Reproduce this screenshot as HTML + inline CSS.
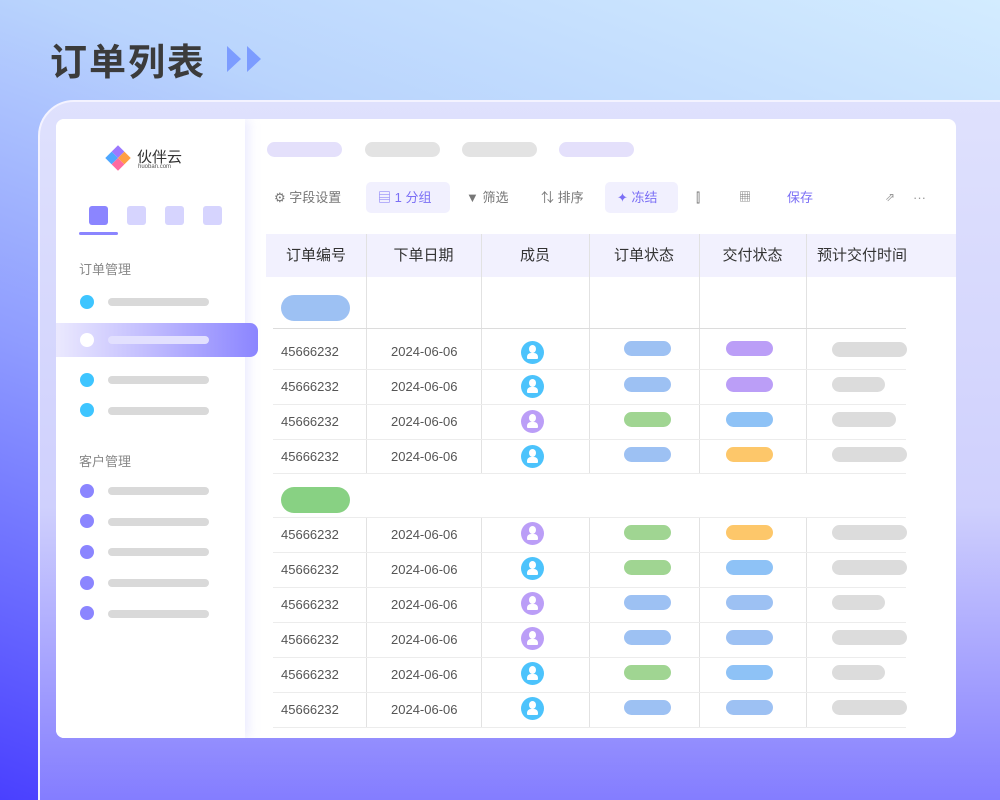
<!DOCTYPE html>
<html style="overflow:hidden;width:1000px;height:800px"><head><meta charset="utf-8"><style>
*{margin:0;padding:0;box-sizing:border-box}
body{width:1000px;height:800px;overflow:hidden;position:relative;font-family:"Liberation Sans","Noto Sans CJK SC",sans-serif;
background:linear-gradient(200deg,#d3ecff 0%,#b9d4fd 30%,#8f9cff 60%,#4a40ff 100%);}
.a{position:absolute}
.frame{left:38px;top:100px;width:1000px;height:740px;border:2px solid #f4f3ff;border-radius:36px;
background:linear-gradient(180deg,#dfe1fd 0%,#cfd0fd 55%,#7a72ff 100%)}
.card{left:56px;top:119px;width:900px;height:619px;background:#fff;border-radius:8px;overflow:hidden}
.side{left:0;top:0;width:189px;height:619px;background:#fff;box-shadow:4px 0 10px rgba(180,180,255,.25)}
.pill{position:absolute;height:15px;border-radius:8px}
.ln{position:absolute;height:8px;border-radius:4px;background:#d9d9d9;left:52px;width:101px}
.dot{position:absolute;width:14px;height:14px;border-radius:50%;left:24px}
.tb{position:absolute;top:63px;height:31px;line-height:31px;font-size:13px;color:#777}
.th{position:absolute;top:115px;height:43px;line-height:43px;font-size:15px;color:#333;text-align:center}
.vl{position:absolute;width:1px;background:#e2e2e2}
.hl{position:absolute;left:217px;width:633px;height:1px;background:#ececec}
.id{position:absolute;left:225px;font-size:13px;color:#555}
.dt{position:absolute;left:335px;font-size:13px;color:#555}
.av{position:absolute;left:465px;width:23px;height:23px;border-radius:50%}
.av::before{content:"";position:absolute;left:8px;top:4px;width:7px;height:8px;border-radius:50%;background:#fff}
.av::after{content:"";position:absolute;left:6px;top:12px;width:11px;height:6px;border-radius:4px 4px 1px 1px;background:#fff}
</style></head><body>
<div class="a" style="left:50px;top:32px;font-size:37px;font-weight:bold;color:#3b3b3b;letter-spacing:2px">订单列表</div>
<svg class="a" style="left:227px;top:46px" width="38" height="26"><polygon points="0,0 14,13 0,26" fill="#7c9cff"/><polygon points="20,0 34,13 20,26" fill="#7c9cff"/></svg>
<div class="a frame"></div>
<div class="a card">
 <div class="a side">
  <svg class="a" style="left:49px;top:26px" width="26" height="26"><g transform="rotate(45 13 13)"><rect x="4" y="4" width="9" height="9" fill="#9c78ff"/><rect x="13" y="4" width="9" height="9" fill="#ff9f43"/><rect x="4" y="13" width="9" height="9" fill="#4ea7ff"/><rect x="13" y="13" width="9" height="9" fill="#ff6aa0"/></g></svg>
  <div class="a" style="left:81px;top:27px;font-size:15px;color:#333">伙伴云</div>
  <div class="a" style="left:82px;top:45px;font-size:6px;color:#555">huoban.com</div>
  <div class="a" style="left:33px;top:87px;width:19px;height:19px;border-radius:3px;background:#8b85ff"></div>
  <div class="a" style="left:71px;top:87px;width:19px;height:19px;border-radius:3px;background:#d6d4fe"></div>
  <div class="a" style="left:109px;top:87px;width:19px;height:19px;border-radius:3px;background:#d6d4fe"></div>
  <div class="a" style="left:147px;top:87px;width:19px;height:19px;border-radius:3px;background:#d6d4fe"></div>
  <div class="a" style="left:23px;top:113px;width:39px;height:3px;border-radius:2px;background:#8b85ff"></div>
  <div class="a" style="left:23px;top:140px;font-size:13px;color:#888">订单管理</div>
  <div class="dot" style="top:176px;background:#3ec5ff"></div><div class="ln" style="top:179px"></div>
  <div class="dot" style="top:254px;background:#3ec5ff"></div><div class="ln" style="top:257px"></div>
  <div class="dot" style="top:284px;background:#3ec5ff"></div><div class="ln" style="top:288px"></div>
  <div class="a" style="left:23px;top:332px;font-size:13px;color:#888">客户管理</div>
  <div class="dot" style="top:365px;background:#8b85ff"></div><div class="ln" style="top:368px"></div>
  <div class="dot" style="top:395px;background:#8b85ff"></div><div class="ln" style="top:399px"></div>
  <div class="dot" style="top:426px;background:#8b85ff"></div><div class="ln" style="top:429px"></div>
  <div class="dot" style="top:457px;background:#8b85ff"></div><div class="ln" style="top:460px"></div>
  <div class="dot" style="top:487px;background:#8b85ff"></div><div class="ln" style="top:491px"></div>
 </div>
 <div class="a" style="left:0;top:204px;width:202px;height:34px;border-radius:0 8px 8px 0;background:linear-gradient(90deg,#ebe9fe,#bdb8fe 50%,#8b85ff);z-index:2"></div>
 <div class="dot" style="top:214px;background:#fff;z-index:3"></div><div class="ln" style="top:217px;background:#e2e0fe;z-index:3"></div>

 <div class="pill" style="left:211px;top:23px;width:75px;background:#e4e0fb"></div>
 <div class="pill" style="left:309px;top:23px;width:75px;background:#e3e3e3"></div>
 <div class="pill" style="left:406px;top:23px;width:75px;background:#e3e3e3"></div>
 <div class="pill" style="left:503px;top:23px;width:75px;background:#e4e0fb"></div>

 <div class="tb" style="left:218px">⚙ 字段设置</div>
 <div class="tb" style="left:310px;width:84px;border-radius:5px;background:#f1f0fe;color:#7b6ff5;padding-left:12px">▤ 1 分组</div>
 <div class="tb" style="left:410px">▼ 筛选</div>
 <div class="tb" style="left:485px">⇅ 排序</div>
 <div class="tb" style="left:549px;width:73px;border-radius:5px;background:#f1f0fe;color:#7b6ff5;padding-left:12px">✦ 冻结</div>
 <div class="tb" style="left:640px">⫿</div>
 <div class="tb" style="left:683px;font-size:12px">▦</div>
 <div class="tb" style="left:731px;color:#7b6ff5">保存</div>
 <div class="tb" style="left:829px;font-size:12px;color:#999">⇗</div>
 <div class="tb" style="left:857px;color:#999">···</div>

 <div class="a" style="left:210px;top:115px;width:690px;height:43px;background:#f2f1fe"></div>
 <div class="th" style="left:210px;width:100px">订单编号</div>
 <div class="th" style="left:310px;width:115px">下单日期</div>
 <div class="th" style="left:425px;width:108px">成员</div>
 <div class="th" style="left:533px;width:110px">订单状态</div>
 <div class="th" style="left:643px;width:107px">交付状态</div>
 <div class="th" style="left:750px;width:112px">预计交付时间</div>

 <div class="vl" style="left:310px;top:115px;height:240px"></div>
 <div class="vl" style="left:425px;top:115px;height:240px"></div>
 <div class="vl" style="left:533px;top:115px;height:240px"></div>
 <div class="vl" style="left:643px;top:115px;height:240px"></div>
 <div class="vl" style="left:750px;top:115px;height:240px"></div>
 <div class="vl" style="left:310px;top:398px;height:210px"></div>
 <div class="vl" style="left:425px;top:398px;height:210px"></div>
 <div class="vl" style="left:533px;top:398px;height:210px"></div>
 <div class="vl" style="left:643px;top:398px;height:210px"></div>
 <div class="vl" style="left:750px;top:398px;height:210px"></div>

 <div class="pill" style="left:225px;top:176px;width:69px;height:26px;border-radius:13px;background:#9dc1f3"></div>
 <div class="hl" style="top:209px;background:#dcdcdc"></div>
 <div class="hl" style="top:250px"></div><div class="hl" style="top:285px"></div><div class="hl" style="top:320px"></div><div class="hl" style="top:354px"></div>
 <div class="pill" style="left:225px;top:368px;width:69px;height:26px;border-radius:13px;background:#88d183"></div>
 <div class="hl" style="top:398px"></div><div class="hl" style="top:433px"></div><div class="hl" style="top:468px"></div><div class="hl" style="top:503px"></div><div class="hl" style="top:538px"></div><div class="hl" style="top:573px"></div><div class="hl" style="top:608px"></div>

 <div class="id" style="top:225px">45666232</div><div class="dt" style="top:225px">2024-06-06</div><div class="av" style="top:222px;background:#4cc3fc"></div>
 <div class="pill" style="left:568px;top:222px;width:47px;background:#9dc1f3"></div><div class="pill" style="left:670px;top:222px;width:47px;background:#bb9ef7"></div><div class="pill" style="left:776px;top:223px;width:75px;background:#dcdcdc"></div>

 <div class="id" style="top:260px">45666232</div><div class="dt" style="top:260px">2024-06-06</div><div class="av" style="top:256px;background:#4cc3fc"></div>
 <div class="pill" style="left:568px;top:258px;width:47px;background:#9dc1f3"></div><div class="pill" style="left:670px;top:258px;width:47px;background:#bb9ef7"></div><div class="pill" style="left:776px;top:258px;width:53px;background:#dcdcdc"></div>

 <div class="id" style="top:295px">45666232</div><div class="dt" style="top:295px">2024-06-06</div><div class="av" style="top:291px;background:#bb9ef7"></div>
 <div class="pill" style="left:568px;top:293px;width:47px;background:#a0d592"></div><div class="pill" style="left:670px;top:293px;width:47px;background:#8ec2f6"></div><div class="pill" style="left:776px;top:293px;width:64px;background:#dcdcdc"></div>

 <div class="id" style="top:330px">45666232</div><div class="dt" style="top:330px">2024-06-06</div><div class="av" style="top:326px;background:#4cc3fc"></div>
 <div class="pill" style="left:568px;top:328px;width:47px;background:#9dc1f3"></div><div class="pill" style="left:670px;top:328px;width:47px;background:#fdc76a"></div><div class="pill" style="left:776px;top:328px;width:75px;background:#dcdcdc"></div>

 <div class="id" style="top:408px">45666232</div><div class="dt" style="top:408px">2024-06-06</div><div class="av" style="top:403px;background:#bb9ef7"></div>
 <div class="pill" style="left:568px;top:406px;width:47px;background:#a0d592"></div><div class="pill" style="left:670px;top:406px;width:47px;background:#fdc76a"></div><div class="pill" style="left:776px;top:406px;width:75px;background:#dcdcdc"></div>

 <div class="id" style="top:443px">45666232</div><div class="dt" style="top:443px">2024-06-06</div><div class="av" style="top:438px;background:#4cc3fc"></div>
 <div class="pill" style="left:568px;top:441px;width:47px;background:#a0d592"></div><div class="pill" style="left:670px;top:441px;width:47px;background:#8ec2f6"></div><div class="pill" style="left:776px;top:441px;width:75px;background:#dcdcdc"></div>

 <div class="id" style="top:478px">45666232</div><div class="dt" style="top:478px">2024-06-06</div><div class="av" style="top:473px;background:#bb9ef7"></div>
 <div class="pill" style="left:568px;top:476px;width:47px;background:#9dc1f3"></div><div class="pill" style="left:670px;top:476px;width:47px;background:#9dc1f3"></div><div class="pill" style="left:776px;top:476px;width:53px;background:#dcdcdc"></div>

 <div class="id" style="top:513px">45666232</div><div class="dt" style="top:513px">2024-06-06</div><div class="av" style="top:508px;background:#bb9ef7"></div>
 <div class="pill" style="left:568px;top:511px;width:47px;background:#9dc1f3"></div><div class="pill" style="left:670px;top:511px;width:47px;background:#9dc1f3"></div><div class="pill" style="left:776px;top:511px;width:75px;background:#dcdcdc"></div>

 <div class="id" style="top:548px">45666232</div><div class="dt" style="top:548px">2024-06-06</div><div class="av" style="top:543px;background:#4cc3fc"></div>
 <div class="pill" style="left:568px;top:546px;width:47px;background:#a0d592"></div><div class="pill" style="left:670px;top:546px;width:47px;background:#8ec2f6"></div><div class="pill" style="left:776px;top:546px;width:53px;background:#dcdcdc"></div>

 <div class="id" style="top:583px">45666232</div><div class="dt" style="top:583px">2024-06-06</div><div class="av" style="top:578px;background:#4cc3fc"></div>
 <div class="pill" style="left:568px;top:581px;width:47px;background:#9dc1f3"></div><div class="pill" style="left:670px;top:581px;width:47px;background:#9dc1f3"></div><div class="pill" style="left:776px;top:581px;width:75px;background:#dcdcdc"></div>
</div>
</body></html>
